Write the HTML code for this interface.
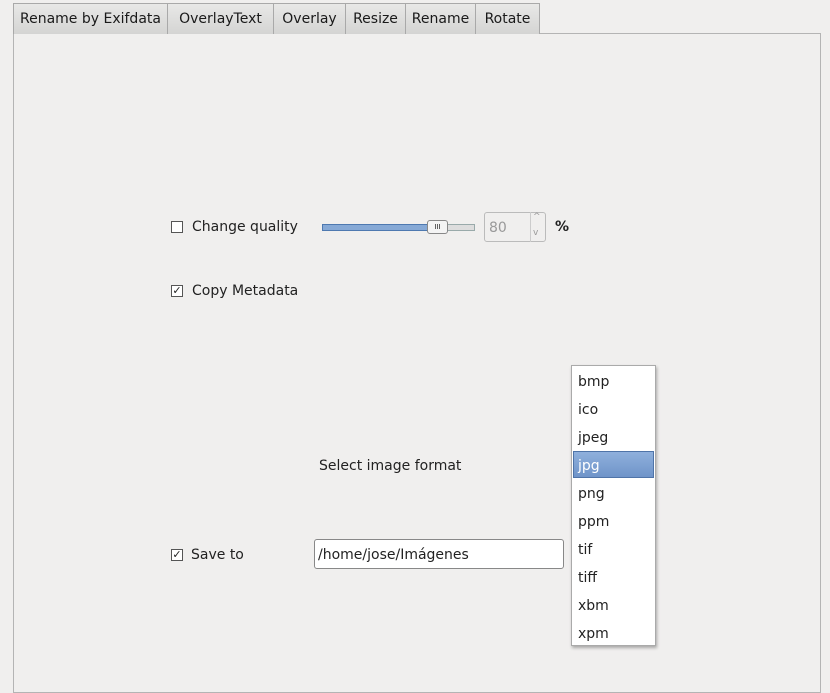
<!DOCTYPE html>
<html><head><style>
body{margin:0;width:830px;height:687px;background:#f0efee;font-family:"DejaVu Sans","Liberation Sans",sans-serif;font-size:14px;color:#222;position:relative;overflow:hidden}
.a{position:absolute}
.tab{position:absolute;top:3px;height:31px;border:1px solid #a9a9a9;border-bottom:none;background:linear-gradient(#e8e8e7,#d4d4d3);box-sizing:border-box;line-height:30px;text-align:center;color:#1a1a1a}
.pane{position:absolute;left:13px;top:33px;width:808px;height:660px;border:1px solid #b4b4b4;box-sizing:border-box;background:#f0efee}
.cb{position:absolute;width:10px;height:10px;border:1px solid #555;background:#fff;font-size:11px;line-height:10px;text-align:center}
.li{position:absolute;left:6px;height:28px;line-height:30px;width:80px}
</style></head><body>
<div class="pane"></div>
<div class="tab" style="left:13px;width:155px">Rename by Exifdata</div>
<div class="tab" style="left:167px;width:107px">OverlayText</div>
<div class="tab" style="left:273px;width:73px">Overlay</div>
<div class="tab" style="left:345px;width:61px">Resize</div>
<div class="tab" style="left:405px;width:71px">Rename</div>
<div class="tab" style="left:475px;width:65px">Rotate</div>

<div class="cb" style="left:171px;top:221px"></div>
<div class="a" style="left:192px;top:219px">Change quality</div>
<div class="a" style="left:322px;top:224px;width:151px;height:5px;border:1px solid #9aa;background:#ddd"></div>
<div class="a" style="left:322px;top:224px;width:110px;height:5px;border:1px solid #4e79b0;background:#86a9d6"></div>
<div class="a" style="left:427px;top:220px;width:19px;height:12px;border:1px solid #888;border-radius:3px;background:#f4f4f4;font-size:7px;line-height:12px;text-align:center">III</div>
<div class="a" style="left:484px;top:212px;width:62px;height:30px;border:1px solid #bbb;border-radius:3px;box-sizing:border-box;color:#999;padding-left:4px;line-height:30px">80</div>
<div class="a" style="left:530px;top:212px;width:1px;height:30px;background:#ccc"></div>
<div class="a" style="left:533px;top:212px;font-size:9px;color:#999">^</div>
<div class="a" style="left:533px;top:228px;font-size:9px;color:#999">v</div>
<div class="a" style="left:555px;top:219px;font-weight:bold">%</div>

<div class="cb" style="left:171px;top:285px">✓</div>
<div class="a" style="left:192px;top:283px">Copy Metadata</div>

<div class="a" style="left:319px;top:458px">Select image format</div>

<div class="cb" style="left:171px;top:549px">✓</div>
<div class="a" style="left:191px;top:547px">Save to</div>
<div class="a" style="left:314px;top:539px;width:250px;height:30px;border:1px solid #888;border-radius:3px;background:#fff;box-sizing:border-box;padding-left:3px;line-height:30px">/home/jose/Imágenes</div>

<div class="a" style="left:571px;top:365px;width:85px;height:281px;background:#fff;border:1px solid #aaa;box-sizing:border-box;box-shadow:1px 2px 3px rgba(0,0,0,.3)">
<div class="li" style="top:1px">bmp</div>
<div class="li" style="top:29px">ico</div>
<div class="li" style="top:57px">jpeg</div>
<div class="a" style="left:1px;top:85px;width:81px;height:27px;background:linear-gradient(#8fb0dc,#6f94c9);border:1px solid #4f74a8;box-sizing:border-box"></div>
<div class="li" style="top:85px;color:#fff">jpg</div>
<div class="li" style="top:113px">png</div>
<div class="li" style="top:141px">ppm</div>
<div class="li" style="top:169px">tif</div>
<div class="li" style="top:197px">tiff</div>
<div class="li" style="top:225px">xbm</div>
<div class="li" style="top:253px">xpm</div>
</div>
</body></html>
